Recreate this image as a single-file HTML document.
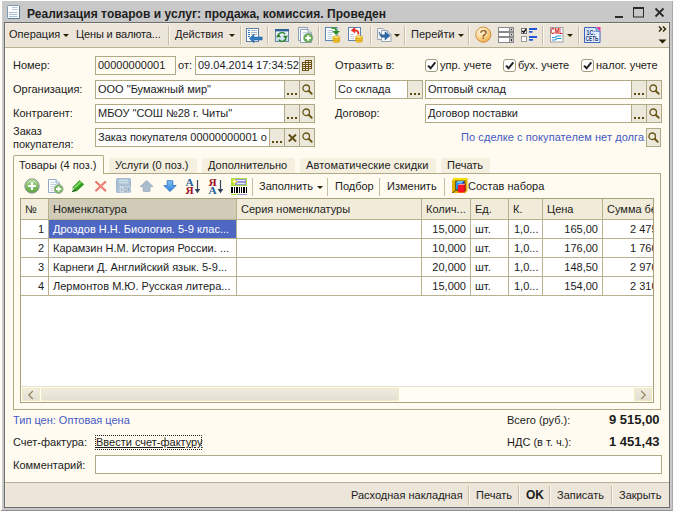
<!DOCTYPE html>
<html lang="ru"><head><meta charset="utf-8"><title>Реализация товаров и услуг</title>
<style>
*{box-sizing:border-box;margin:0;padding:0}
html,body{width:673px;height:511px;overflow:hidden;background:#fff}
body{font-family:"Liberation Sans",sans-serif;font-size:11px;color:#1c1c1c;position:relative}
.abs,.abs *{position:absolute}
#win{left:2px;top:1px;width:671px;height:510px;background:#c8c8c8}
#title{left:27px;top:7px;font-weight:bold;font-size:12px;line-height:14px;white-space:nowrap;color:#1e1e1e;letter-spacing:0.045px}
#frame{left:4px;top:22px;width:666px;height:486px;background:#6c6c6c}
#tb{left:5px;top:23px;width:664px;height:24px;background:#ece5d9}
#form{left:5px;top:48px;width:664px;height:434px;background:#fffbf0}
#tbline{left:5px;top:47px;width:664px;height:1px;background:#b8b18f}
#cmd{left:5px;top:482px;width:664px;height:25px;background:#ece5d9;border-top:1px solid #b8b18f}
.t{white-space:nowrap;line-height:13px;height:13px}
.sep{width:2px;border-left:1px solid #c5bfa3;border-right:1px solid #fbf9f2}
.fld{background:#fff;border:1px solid #b0a985;height:19px}
.fld .t{top:2px;left:2px}
.btn{top:0;width:15px;height:17px;background:#ece8dc;border-left:1px solid #b0a985}
.dots{left:2px;top:0px;font-weight:bold;font-size:11px;line-height:13px;letter-spacing:0.3px;color:#4a3a10}
.cb{width:13px;height:13px;border:1px solid #a39c80;border-radius:3px;background:#fff}
.arr{width:0;height:0;border-left:3px solid transparent;border-right:3px solid transparent;border-top:3px solid #2b2000}
.tab{top:158px;height:15px;background:#f4efdf;border-radius:3px 3px 0 0}
.tab .t{top:1px}
.blue{color:#4559c4}
.gl{background:#b8b18f}
.r{text-align:right}
.sb{background:linear-gradient(#efebe0,#e3dfd2);border:1px solid #f1e9c0}
</style></head><body>
<div class="abs">
<div style="left:0;top:1px;width:1px;height:510px;background:#fffbf0"></div>
<div id="win"></div>
<div style="left:1px;top:510px;width:672px;height:1px;background:#929292"></div>
<div style="left:672px;top:1px;width:1px;height:510px;background:#a8a8a8"></div>
<div id="frame"></div>
<div id="title">Реализация товаров и услуг: продажа, комиссия. Проведен</div>
<div id="tb"></div>
<div id="tbline"></div>
<div style="left:5px;top:23px;width:664px;height:1px;background:#f5efe2"></div>
<div style="left:5px;top:23px;width:1px;height:24px;background:#f5efe2"></div>
<div id="form"></div>
<div id="cmd"></div>
<div style="left:5px;top:506px;width:664px;height:1px;background:#f3ecde"></div>
<div style="left:5px;top:483px;width:1px;height:24px;background:#f3ecde"></div>

<!-- toolbar text -->
<div class="t" style="left:9px;top:28px">Операция</div>
<div class="arr" style="left:63px;top:34px"></div>
<div class="t" style="left:76px;top:28px;letter-spacing:-0.15px">Цены и валюта...</div>
<div class="sep" style="left:168px;top:26px;height:19px"></div>
<div class="t" style="left:175px;top:28px">Действия</div>
<div class="arr" style="left:229px;top:34px"></div>
<div class="sep" style="left:240px;top:26px;height:19px"></div>
<div class="sep" style="left:267px;top:26px;height:19px"></div>
<div class="sep" style="left:318px;top:26px;height:19px"></div>
<div class="sep" style="left:370px;top:26px;height:19px"></div>
<div class="arr" style="left:394px;top:34px"></div>
<div class="sep" style="left:404px;top:26px;height:19px"></div>
<div class="t" style="left:411px;top:28px">Перейти</div>
<div class="arr" style="left:458px;top:34px"></div>
<div class="sep" style="left:468px;top:26px;height:19px"></div>
<div class="sep" style="left:542px;top:26px;height:19px"></div>
<div class="arr" style="left:567px;top:34px"></div>
<div class="sep" style="left:578px;top:26px;height:19px"></div>

<!-- row 1 -->
<div class="t" style="left:13px;top:59px">Номер:</div>
<div class="fld" style="left:95px;top:56px;width:81px;background:#fffbf0"><div class="t">00000000001</div></div>
<div class="t" style="left:178px;top:59px">от:</div>
<div class="fld" style="left:195px;top:56px;width:120px"><div class="t">09.04.2014 17:34:52</div><div class="btn" style="left:103px"><svg style="left:2px;top:3px" width="10" height="11" viewBox="0 0 10 11" shape-rendering="crispEdges"><g fill="#6b5210"><rect x="3" y="0" width="7" height="1"/><rect x="0" y="2" width="10" height="1"/><rect x="0" y="4" width="10" height="1"/><rect x="0" y="6" width="10" height="1"/><rect x="0" y="8" width="10" height="1"/><rect x="0" y="10" width="7" height="1"/><rect x="0" y="2" width="1" height="9"/><rect x="3" y="0" width="1" height="11"/><rect x="6" y="0" width="1" height="11"/><rect x="9" y="0" width="1" height="9"/></g></svg></div></div>
<div class="t" style="left:335px;top:59px">Отразить в:</div>
<div class="cb" style="left:425px;top:59px"><svg style="left:0;top:0" width="11" height="11" viewBox="0 0 11 11"><path d="M2 5.6 L4.6 8.3 L9.3 2.4" stroke="#222" stroke-width="2" fill="none"/></svg></div><div class="t" style="left:440px;top:59px">упр. учете</div>
<div class="cb" style="left:503px;top:59px"><svg style="left:0;top:0" width="11" height="11" viewBox="0 0 11 11"><path d="M2 5.6 L4.6 8.3 L9.3 2.4" stroke="#222" stroke-width="2" fill="none"/></svg></div><div class="t" style="left:518px;top:59px">бух. учете</div>
<div class="cb" style="left:581px;top:59px"><svg style="left:0;top:0" width="11" height="11" viewBox="0 0 11 11"><path d="M2 5.6 L4.6 8.3 L9.3 2.4" stroke="#222" stroke-width="2" fill="none"/></svg></div><div class="t" style="left:596px;top:59px">налог. учете</div>

<!-- row 2 -->
<div class="t" style="left:13px;top:83px">Организация:</div>
<div class="fld" style="left:95px;top:80px;width:220px"><div class="t">ООО "Бумажный мир"</div><div class="btn" style="left:188px"><svg style="left:2px;top:12px" width="10" height="2" viewBox="0 0 10 2" shape-rendering="crispEdges"><g fill="#5c4a10"><rect x="0" y="0" width="2" height="2"/><rect x="4" y="0" width="2" height="2"/><rect x="8" y="0" width="2" height="2"/></g></svg></div><div class="btn" style="left:203px"><svg style="left:1px;top:2px" width="13" height="13" viewBox="0 0 13 13"><circle cx="5.2" cy="5.3" r="3.3" fill="none" stroke="#6b5716" stroke-width="1.3"/><path d="M7.6 7.8 L10.7 10.8" stroke="#6b5716" stroke-width="1.9" stroke-linecap="round"/></svg></div></div>
<div class="fld" style="left:335px;top:80px;width:88px"><div class="t">Со склада</div><div class="btn" style="left:71px"><svg style="left:2px;top:12px" width="10" height="2" viewBox="0 0 10 2" shape-rendering="crispEdges"><g fill="#5c4a10"><rect x="0" y="0" width="2" height="2"/><rect x="4" y="0" width="2" height="2"/><rect x="8" y="0" width="2" height="2"/></g></svg></div></div>
<div class="fld" style="left:425px;top:80px;width:237px"><div class="t">Оптовый склад</div><div class="btn" style="left:205px"><svg style="left:2px;top:12px" width="10" height="2" viewBox="0 0 10 2" shape-rendering="crispEdges"><g fill="#5c4a10"><rect x="0" y="0" width="2" height="2"/><rect x="4" y="0" width="2" height="2"/><rect x="8" y="0" width="2" height="2"/></g></svg></div><div class="btn" style="left:220px"><svg style="left:1px;top:2px" width="13" height="13" viewBox="0 0 13 13"><circle cx="5.2" cy="5.3" r="3.3" fill="none" stroke="#6b5716" stroke-width="1.3"/><path d="M7.6 7.8 L10.7 10.8" stroke="#6b5716" stroke-width="1.9" stroke-linecap="round"/></svg></div></div>

<!-- row 3 -->
<div class="t" style="left:13px;top:107px">Контрагент:</div>
<div class="fld" style="left:95px;top:104px;width:220px"><div class="t">МБОУ "СОШ №28 г. Читы"</div><div class="btn" style="left:188px"><svg style="left:2px;top:12px" width="10" height="2" viewBox="0 0 10 2" shape-rendering="crispEdges"><g fill="#5c4a10"><rect x="0" y="0" width="2" height="2"/><rect x="4" y="0" width="2" height="2"/><rect x="8" y="0" width="2" height="2"/></g></svg></div><div class="btn" style="left:203px"><svg style="left:1px;top:2px" width="13" height="13" viewBox="0 0 13 13"><circle cx="5.2" cy="5.3" r="3.3" fill="none" stroke="#6b5716" stroke-width="1.3"/><path d="M7.6 7.8 L10.7 10.8" stroke="#6b5716" stroke-width="1.9" stroke-linecap="round"/></svg></div></div>
<div class="t" style="left:335px;top:107px">Договор:</div>
<div class="fld" style="left:425px;top:104px;width:237px"><div class="t">Договор поставки</div><div class="btn" style="left:205px"><svg style="left:2px;top:12px" width="10" height="2" viewBox="0 0 10 2" shape-rendering="crispEdges"><g fill="#5c4a10"><rect x="0" y="0" width="2" height="2"/><rect x="4" y="0" width="2" height="2"/><rect x="8" y="0" width="2" height="2"/></g></svg></div><div class="btn" style="left:220px"><svg style="left:1px;top:2px" width="13" height="13" viewBox="0 0 13 13"><circle cx="5.2" cy="5.3" r="3.3" fill="none" stroke="#6b5716" stroke-width="1.3"/><path d="M7.6 7.8 L10.7 10.8" stroke="#6b5716" stroke-width="1.9" stroke-linecap="round"/></svg></div></div>

<!-- row 4 -->
<div class="t" style="left:13px;top:125px">Заказ</div>
<div class="t" style="left:13px;top:138px">покупателя:</div>
<div class="fld" style="left:95px;top:128px;width:220px"><div class="t">Заказ покупателя 00000000001 о</div><div class="btn" style="left:173px"><svg style="left:2px;top:12px" width="10" height="2" viewBox="0 0 10 2" shape-rendering="crispEdges"><g fill="#5c4a10"><rect x="0" y="0" width="2" height="2"/><rect x="4" y="0" width="2" height="2"/><rect x="8" y="0" width="2" height="2"/></g></svg></div><div class="btn" style="left:188px"><svg style="left:3px;top:5px" width="9" height="8" viewBox="0 0 9 8"><path d="M0.8 0.6 L8 7.4 M8 0.6 L0.8 7.4" stroke="#5c4a10" stroke-width="2" fill="none"/></svg></div><div class="btn" style="left:203px"><svg style="left:1px;top:2px" width="13" height="13" viewBox="0 0 13 13"><circle cx="5.2" cy="5.3" r="3.3" fill="none" stroke="#6b5716" stroke-width="1.3"/><path d="M7.6 7.8 L10.7 10.8" stroke="#6b5716" stroke-width="1.9" stroke-linecap="round"/></svg></div></div>
<div class="t blue" style="left:461px;top:131px;letter-spacing:0.08px">По сделке с покупателем нет долга</div>
<div class="fld" style="left:646px;top:128px;width:15px;background:#ece8dc"><svg style="left:0px;top:2px" width="13" height="13" viewBox="0 0 13 13"><circle cx="5.2" cy="5.3" r="3.3" fill="none" stroke="#6b5716" stroke-width="1.3"/><path d="M7.6 7.8 L10.7 10.8" stroke="#6b5716" stroke-width="1.9" stroke-linecap="round"/></svg></div>

<!-- tabs -->
<div style="left:13px;top:173px;width:648px;height:237px;border:1px solid #b0a985;background:#fffbf0"></div>
<div style="left:13px;top:155px;width:91px;height:19px;border:1px solid #b0a985;border-bottom:none;background:#fffbf0;border-radius:2px 2px 0 0"></div>
<div class="t" style="left:19px;top:159px">Товары (4 поз.)</div>
<div class="tab" style="left:109px;width:88px"><div class="t" style="left:6px">Услуги (0 поз.)</div></div>
<div class="tab" style="left:202px;width:93px"><div class="t" style="left:6px">Дополнительно</div></div>
<div class="tab" style="left:300px;width:136px"><div class="t" style="left:6px;letter-spacing:0.12px">Автоматические скидки</div></div>
<div class="tab" style="left:441px;width:49px"><div class="t" style="left:6px">Печать</div></div>

<!-- sub toolbar -->
<div class="sep" style="left:252px;top:178px;height:18px"></div>
<div class="t" style="left:259px;top:180px">Заполнить</div>
<div class="arr" style="left:317px;top:186px"></div>
<div class="sep" style="left:327px;top:178px;height:18px"></div>
<div class="t" style="left:335px;top:180px">Подбор</div>
<div class="sep" style="left:379px;top:178px;height:18px"></div>
<div class="t" style="left:387px;top:180px">Изменить</div>
<div class="sep" style="left:444px;top:178px;height:18px"></div>
<div class="t" style="left:468px;top:180px">Состав набора</div>

<!-- table -->
<div id="tbl" style="left:20px;top:198px;width:634px;height:205px;background:#fff;border:1px solid #a8a17c;overflow:hidden">
<div style="left:0;top:0;width:632px;height:20px;background:#f1ecd9"></div>
<div style="left:28px;top:0;width:187px;height:20px;background:#d0ccb8"></div>
<div class="gl" style="left:0;top:20px;width:632px;height:1px"></div>
<div class="gl" style="left:0;top:39px;width:632px;height:1px"></div>
<div class="gl" style="left:0;top:58px;width:632px;height:1px"></div>
<div class="gl" style="left:0;top:77px;width:632px;height:1px"></div>
<div class="gl" style="left:0;top:96px;width:632px;height:1px"></div>
<div class="gl" style="left:27px;top:0;width:1px;height:97px"></div>
<div class="gl" style="left:215px;top:0;width:1px;height:97px"></div>
<div class="gl" style="left:400px;top:0;width:1px;height:97px"></div>
<div class="gl" style="left:449px;top:0;width:1px;height:97px"></div>
<div class="gl" style="left:487px;top:0;width:1px;height:97px"></div>
<div class="gl" style="left:521px;top:0;width:1px;height:97px"></div>
<div class="gl" style="left:581px;top:0;width:1px;height:97px"></div>
<div style="left:28px;top:21px;width:187px;height:18px;background:#4e67c3"></div>
<div class="t" style="left:4px;top:4px">№</div>
<div class="t" style="left:32px;top:4px">Номенклатура</div>
<div class="t" style="left:220px;top:4px">Серия номенклатуры</div>
<div class="t" style="left:405px;top:4px">Колич...</div>
<div class="t" style="left:454px;top:4px">Ед.</div>
<div class="t" style="left:492px;top:4px">К.</div>
<div class="t" style="left:526px;top:4px">Цена</div>
<div class="t" style="left:586px;top:4px">Сумма без скидки</div>
<div class="t r" style="left:0px;width:23px;top:24px">1</div>
<div class="t" style="left:32px;top:24px;color:#fff">Дроздов Н.Н. Биология. 5-9 клас...</div>
<div class="t r" style="left:401px;width:44px;top:24px">15,000</div>
<div class="t" style="left:454px;top:24px">шт.</div>
<div class="t" style="left:493px;top:24px">1,0...</div>
<div class="t r" style="left:522px;width:55px;top:24px">165,00</div>
<div class="t" style="left:609px;top:24px">2 475,00</div>
<div class="t r" style="left:0px;width:23px;top:43px">2</div>
<div class="t" style="left:32px;top:43px;">Карамзин Н.М. История России. ...</div>
<div class="t r" style="left:401px;width:44px;top:43px">10,000</div>
<div class="t" style="left:454px;top:43px">шт.</div>
<div class="t" style="left:493px;top:43px">1,0...</div>
<div class="t r" style="left:522px;width:55px;top:43px">176,00</div>
<div class="t" style="left:609px;top:43px">1 760,00</div>
<div class="t r" style="left:0px;width:23px;top:62px">3</div>
<div class="t" style="left:32px;top:62px;">Карнеги Д. Английский язык. 5-9...</div>
<div class="t r" style="left:401px;width:44px;top:62px">20,000</div>
<div class="t" style="left:454px;top:62px">шт.</div>
<div class="t" style="left:493px;top:62px">1,0...</div>
<div class="t r" style="left:522px;width:55px;top:62px">148,50</div>
<div class="t" style="left:609px;top:62px">2 970,00</div>
<div class="t r" style="left:0px;width:23px;top:81px">4</div>
<div class="t" style="left:32px;top:81px;">Лермонтов М.Ю. Русская литера...</div>
<div class="t r" style="left:401px;width:44px;top:81px">15,000</div>
<div class="t" style="left:454px;top:81px">шт.</div>
<div class="t" style="left:493px;top:81px">1,0...</div>
<div class="t r" style="left:522px;width:55px;top:81px">154,00</div>
<div class="t" style="left:609px;top:81px">2 310,00</div>
<div style="left:0;top:187px;width:632px;height:16px;background:#fffdf4;border-top:1px solid #e6e1cf"></div>
<div class="sb" style="left:1px;top:189px;width:18px;height:13px"></div>
<div class="sb" style="left:20px;top:189px;width:358px;height:13px"></div>
<div class="sb" style="left:613px;top:189px;width:18px;height:13px"></div>
</div>

<!-- bottom -->
<div class="t blue" style="left:13px;top:414px">Тип цен: Оптовая цена</div>
<div class="t" style="left:507px;top:414px">Всего (руб.):</div>
<div class="t" style="left:609px;top:413px;font-weight:bold;font-size:13px;line-height:14px;height:14px">9 515,00</div>
<div class="t" style="left:13px;top:436px">Счет-фактура:</div>
<div class="t" style="left:96px;top:436px;text-decoration:underline">Ввести счет-фактуру</div>
<div style="left:95px;top:435px;width:107px;height:15px;border:1px dotted #222"></div>
<div class="t" style="left:507px;top:436px">НДС (в т. ч.):</div>
<div class="t" style="left:609px;top:435px;font-weight:bold;font-size:13px;line-height:14px;height:14px">1 451,43</div>
<div class="t" style="left:13px;top:459px">Комментарий:</div>
<div class="fld" style="left:95px;top:455px;width:567px"></div>

<!-- command bar -->
<div class="t" style="left:351px;top:489px">Расходная накладная</div>
<div class="sep" style="left:468px;top:486px;height:19px"></div>
<div class="t" style="left:476px;top:489px">Печать</div>
<div class="sep" style="left:518px;top:486px;height:19px"></div>
<div class="t" style="left:526px;top:488px;font-weight:bold;font-size:12px;line-height:14px;height:14px">OK</div>
<div class="sep" style="left:549px;top:486px;height:19px"></div>
<div class="t" style="left:557px;top:489px">Записать</div>
<div class="sep" style="left:611px;top:486px;height:19px"></div>
<div class="t" style="left:619px;top:489px">Закрыть</div>
<!-- icons -->
<!-- title doc icon -->
<svg style="left:7px;top:5px" width="13" height="14" viewBox="0 0 13 14"><rect x="0.5" y="0.5" width="12" height="13" rx="1" fill="#fff" stroke="#7f9bb3"/><path d="M12.5 1 V13.5 H1" fill="none" stroke="#5f7d95"/><path d="M5 2.5 H10.5 M5 4.5 H10.5" stroke="#b9c9d9"/><path d="M2 7.5 H10.5 M2 9.5 H10.5 M2 11.5 H10.5" stroke="#a9bfd5"/></svg>
<!-- window buttons -->
<svg style="left:612px;top:4px" width="56" height="16" viewBox="0 0 56 16"><rect x="3" y="12" width="8" height="2" fill="#2a2a2a"/><rect x="21.5" y="4" width="10" height="9" fill="none" stroke="#2a2a2a"/><rect x="21" y="3" width="11" height="2" fill="#2a2a2a"/><path d="M43.5 4.5 L51.5 12.5 M51.5 4.5 L43.5 12.5" stroke="#2a2a2a" stroke-width="1.8"/></svg>
<!-- toolbar overflow -->
<svg style="left:657px;top:25px" width="12" height="21" viewBox="0 0 12 21"><path d="M2 1.5 L4.5 4 L2 6.5 M6 1.5 L8.5 4 L6 6.5" fill="none" stroke="#2b2000" stroke-width="1.4"/><path d="M1.5 14.5 H9.5 L5.5 18.5 Z" fill="#2b2000"/></svg>

<!-- tb icon 1: doc with blue arrow left -->
<svg style="left:246px;top:28px" width="17" height="15" viewBox="0 0 17 15"><rect x="0.5" y="0.5" width="12" height="13" fill="#fff" stroke="#5c80a8"/><path d="M2 2.5 H4 M2 4.5 H4 M2 6.5 H4 M2 8.5 H4" stroke="#3a78c0"/><path d="M5 2.5 H11 M5 4.5 H11 M5 6.5 H11 M5 8.5 H8" stroke="#a8b4c0"/><path d="M3.2 10.5 L8 6.2 V9 H16.2 V12 H8 V14.8 Z" fill="#2f7cc0" stroke="#245f98" stroke-width="0.5"/></svg>
<!-- tb icon 2: refresh window -->
<svg style="left:275px;top:29px" width="14" height="13" viewBox="0 0 14 13"><defs><linearGradient id="g2" x1="0" y1="0" x2="0" y2="1"><stop offset="0" stop-color="#fff"/><stop offset="1" stop-color="#c4d9ee"/></linearGradient></defs><rect x="0.5" y="0.5" width="13" height="12" fill="url(#g2)" stroke="#6b8cb0"/><rect x="0" y="0" width="14" height="2.4" fill="#2e6298"/><path d="M3 8 A4 4 0 0 1 10.2 5.2" fill="none" stroke="#2f8a2f" stroke-width="1.5"/><path d="M11 9.5 A4 4 0 0 1 3.8 10.6" fill="none" stroke="#2f8a2f" stroke-width="1.5"/><path d="M1 8.2 H6 L3.5 4.8 Z" fill="#2a7d2a"/><path d="M8 6.8 H13 L10.5 10.2 Z" fill="#2a7d2a"/></svg>
<!-- tb icon 3: copy docs with plus -->
<svg style="left:298px;top:27px" width="16" height="16" viewBox="0 0 16 16"><path d="M0.5 0.5 H9.5 V13.5 H0.5 Z" fill="#f4f7fb" stroke="#8e9fb5"/><path d="M2.5 2.5 H10 L13.5 6 V15.5 H2.5 Z" fill="#fff" stroke="#8e9fb5"/><path d="M10 2.5 V6 H13.5" fill="#dfe8f2" stroke="#8e9fb5"/><path d="M4.5 5.5 H9 M4.5 7.5 H7" stroke="#c5d0de"/><circle cx="10.2" cy="11" r="4.6" fill="#63ae4e" stroke="#8aa08a" stroke-width="0.8"/><path d="M10.2 8.2 V13.8 M7.4 11 H13" stroke="#fff" stroke-width="2"/></svg>
<!-- tb icon 4: doc, green arrow, coins -->
<svg style="left:325px;top:27px" width="16" height="16" viewBox="0 0 16 16"><rect x="0.5" y="0.5" width="11.5" height="13" fill="#fff" stroke="#5c84b4"/><path d="M2.5 3.5 H8 M2.5 5.5 H8 M2.5 7.5 H7 M2.5 9.5 H7 M2.5 11.5 H7" stroke="#b8cde2"/><path d="M6 0.8 C10 0.5 11.2 2 11.2 4.2" fill="none" stroke="#3d9a3d" stroke-width="1.8"/><path d="M7 4 H15 L11 8 Z" fill="#2f8f2f"/><g fill="#f4c830" stroke="#c89610" stroke-width="0.6"><ellipse cx="11.3" cy="14" rx="3.6" ry="1.5"/><ellipse cx="11.3" cy="12.2" rx="3.6" ry="1.5"/><ellipse cx="11.3" cy="10.4" rx="3.6" ry="1.5"/></g><ellipse cx="11.3" cy="10.2" rx="2.4" ry="0.8" fill="#fbe88a"/></svg>
<!-- tb icon 5: doc, red arrow, coins -->
<svg style="left:348px;top:27px" width="16" height="16" viewBox="0 0 16 16"><rect x="0.5" y="0.5" width="12" height="13" fill="#fff" stroke="#5c84b4"/><path d="M2.5 7.5 H6 M2.5 9.5 H6 M2.5 11.5 H6" stroke="#b8cde2"/><path d="M5.5 3.4 C9.5 3 10.6 4.8 10.4 7.5" fill="none" stroke="#e03a2a" stroke-width="1.9"/><path d="M7.2 0 V6.6 L2.8 3.3 Z" fill="#e32f20"/><g fill="#f4c830" stroke="#c89610" stroke-width="0.6"><ellipse cx="11" cy="13.8" rx="3.6" ry="1.5"/><ellipse cx="11" cy="12" rx="3.6" ry="1.5"/><ellipse cx="11" cy="10.2" rx="3.6" ry="1.5"/></g><ellipse cx="11" cy="10" rx="2.4" ry="0.8" fill="#fbe88a"/></svg>
<!-- tb icon 6: two docs blue arrow -->
<svg style="left:377px;top:28px" width="15" height="14" viewBox="0 0 15 14"><path d="M0.5 0.5 H6 L8.5 3 V11.5 H0.5 Z" fill="#f2f4f8" stroke="#9aa4b2"/><path d="M4.5 2.5 H10.5 L14 6 V13.5 H4.5 Z" fill="#f8fafc" stroke="#9aa4b2"/><path d="M10.5 2.5 V6 H14" fill="#dfe6ee" stroke="#9aa4b2"/><path d="M2.2 4 C3 7 5 7.2 8 6.8 V3.8 L13 7.8 L8 12 V9.2 C5 9.8 2.6 8.6 2.2 4 Z" fill="#2f6aa8" stroke="#234f80" stroke-width="0.5"/></svg>
<!-- tb help -->
<svg style="left:475px;top:26px" width="17" height="17" viewBox="0 0 17 17"><defs><radialGradient id="gh" cx="0.35" cy="0.3" r="0.8"><stop offset="0" stop-color="#fff8e8"/><stop offset="0.55" stop-color="#fbd48e"/><stop offset="1" stop-color="#f0a43a"/></radialGradient></defs><circle cx="8.3" cy="8.6" r="7.6" fill="url(#gh)" stroke="#c98a3c" stroke-width="0.9"/><text x="8.4" y="13.2" text-anchor="middle" font-family="Liberation Sans, sans-serif" font-size="13" fill="#85531a" stroke="#85531a" stroke-width="0.2">?</text></svg>
<!-- tb combos list -->
<svg style="left:498px;top:27px" width="16" height="16" viewBox="0 0 16 16" shape-rendering="crispEdges"><g><rect x="0" y="0" width="16" height="5" fill="#8a8a8a"/><rect x="1" y="1" width="10" height="3" fill="#fff"/><rect x="12" y="1" width="3" height="3" fill="#c8c8c8"/><rect x="13" y="2" width="1" height="1" fill="#222"/><rect x="0" y="5" width="16" height="5" fill="#8a8a8a"/><rect x="1" y="6" width="10" height="3" fill="#fff"/><rect x="12" y="6" width="3" height="3" fill="#c8c8c8"/><rect x="13" y="7" width="1" height="1" fill="#222"/><rect x="0" y="10" width="16" height="6" fill="#8a8a8a"/><rect x="1" y="11" width="10" height="4" fill="#fff"/><rect x="12" y="11" width="3" height="4" fill="#c8c8c8"/><rect x="13" y="12" width="1" height="2" fill="#222"/></g></svg>
<!-- tb checklist -->
<svg style="left:521px;top:28px" width="17" height="14" viewBox="0 0 17 14"><rect x="0.5" y="0.5" width="5" height="5" fill="#fff" stroke="#777"/><path d="M1.3 2.8 L2.8 4.4 L5 1.2" fill="none" stroke="#000" stroke-width="1.3"/><rect x="0.5" y="8.5" width="5" height="5" fill="#fff" stroke="#999"/><g fill="#2456d8"><rect x="8" y="0" width="8" height="2"/><rect x="8" y="3" width="3.5" height="1.7"/><rect x="8" y="8" width="8" height="2"/><rect x="8" y="11" width="4" height="1.7"/></g></svg>
<!-- tb CML -->
<svg style="left:550px;top:27px" width="14" height="16" viewBox="0 0 14 16"><rect x="0.5" y="0.5" width="12.5" height="14.5" fill="#fff" stroke="#a0a0a0"/><text x="0.8" y="6.8" font-family="Liberation Sans, sans-serif" font-weight="bold" font-size="8.2" fill="#d41414" textLength="11.8" lengthAdjust="spacingAndGlyphs">CML</text><path d="M2 10.5 H5 L7 9 H11.5" fill="none" stroke="#2a96d6" stroke-width="1.1"/><path d="M2 13 H5 L7 11.5 H11.5" fill="none" stroke="#2a96d6" stroke-width="1.1"/></svg>
<!-- tb 1C:Сеть -->
<svg style="left:584px;top:27px" width="17" height="16" viewBox="0 0 17 16"><defs><linearGradient id="gn" x1="0" y1="0" x2="1" y2="1"><stop offset="0" stop-color="#cfe0f6"/><stop offset="1" stop-color="#f6faff"/></linearGradient></defs><path d="M0.5 0.5 H12 L16 4.5 V15.5 H0.5 Z" fill="url(#gn)" stroke="#3f63b8"/><path d="M12 0 H16.5 V4.5 Z" fill="#f03a9a"/><path d="M12 0.5 V4.5 H16" fill="#8fb2e6" stroke="#3f63b8" stroke-width="0.6"/><text x="2.6" y="8" font-family="Liberation Sans, sans-serif" font-weight="bold" font-size="8" fill="#1d3c86" textLength="8.6" lengthAdjust="spacingAndGlyphs">1С:</text><text x="1.6" y="14.4" font-family="Liberation Sans, sans-serif" font-weight="bold" font-size="7.6" fill="#1d3c86" textLength="12.8" lengthAdjust="spacingAndGlyphs">СЕТЬ</text></svg>

<!-- sub toolbar icons -->
<svg style="left:24px;top:178px" width="16" height="16" viewBox="0 0 16 16"><defs><linearGradient id="gp" x1="0" y1="0" x2="0" y2="1"><stop offset="0" stop-color="#c2e4b0"/><stop offset="0.5" stop-color="#80be66"/><stop offset="1" stop-color="#58a43f"/></linearGradient></defs><circle cx="8" cy="8" r="7.2" fill="url(#gp)" stroke="#8e948c" stroke-width="1"/><path d="M8 4 V12 M4 8 H12" stroke="#fff" stroke-width="2.1"/></svg>
<svg style="left:48px;top:179px" width="16" height="15" viewBox="0 0 16 15"><path d="M0.5 0.5 H8 L11.5 4 V13.5 H0.5 Z" fill="#fff" stroke="#93abc9"/><path d="M8 0.5 V4 H11.5" fill="#e4ecf5" stroke="#93abc9"/><path d="M2.5 3.5 H6.5 M2.5 5.5 H8 M2.5 7.5 H6 M2.5 9.5 H5 M2.5 11.5 H5" stroke="#c0d0e2"/><circle cx="10.6" cy="10" r="4.4" fill="#74b85e" stroke="#93a291" stroke-width="0.9"/><path d="M10.6 7.4 V12.6 M8 10 H13.2" stroke="#fff" stroke-width="1.9"/></svg>
<svg style="left:71px;top:180px" width="14" height="13" viewBox="0 0 14 13"><path d="M0.8 12.2 L1.8 7.2 L5.8 11 Z" fill="#1f6a14"/><path d="M1.8 7.2 L8.6 0.6 L12.8 4.4 L5.8 11 Z" fill="#3fb02a" stroke="#2a8a1c" stroke-width="0.6"/><path d="M3.4 8 L10 1.8" stroke="#8fe070" stroke-width="1.3"/><path d="M5 9.8 L11.6 3.6" stroke="#2c931d" stroke-width="1.2"/><path d="M1 11.4 L1.8 7.6 L3.2 9 Z" fill="#fff"/></svg>
<svg style="left:94px;top:180px" width="13" height="12" viewBox="0 0 13 12"><path d="M2.2 2 L11.2 10.6 M11.2 2 L2.2 10.6" stroke="#e76a63" stroke-width="2.1" stroke-linecap="round"/><path d="M2.6 2.4 L10.8 10.2 M10.8 2.4 L2.6 10.2" stroke="#f4aaa2" stroke-width="0.7" stroke-linecap="round"/></svg>
<svg style="left:116px;top:178px" width="16" height="15" viewBox="0 0 16 15"><rect x="0.5" y="0.5" width="14" height="14" rx="0.8" fill="#abbfd5" stroke="#a2b6cd"/><rect x="3" y="1.2" width="9.2" height="4.6" fill="#c9dbe6" stroke="#b7c9da" stroke-width="0.6"/><path d="M3.5 3.5 H11.8" stroke="#b4ccd8" stroke-width="0.8"/><rect x="3.6" y="8.4" width="11.4" height="6.2" fill="#d3deea"/><rect x="4.6" y="10" width="2" height="3.4" fill="#abbfd5"/><text x="7.6" y="14.4" font-family="Liberation Sans, sans-serif" font-weight="bold" font-size="6.8" fill="#8da3bd" textLength="7.4" lengthAdjust="spacingAndGlyphs">OK</text></svg>
<svg style="left:140px;top:180px" width="14" height="12" viewBox="0 0 14 12"><path d="M6.6 0.4 L13 6.6 H10 V10.8 Q10 11.6 9.2 11.6 H4 Q3.2 11.6 3.2 10.8 V6.6 H0.2 Z" fill="#a9bdcd" stroke="#91a8bb" stroke-width="0.8"/></svg>
<svg style="left:163px;top:180px" width="14" height="12" viewBox="0 0 14 12"><defs><linearGradient id="gd" x1="0" y1="0" x2="0" y2="1"><stop offset="0" stop-color="#7fc0f6"/><stop offset="1" stop-color="#2f82d8"/></linearGradient></defs><path d="M7 11.5 L13.2 5.5 H9.8 V0.7 H4.2 V5.5 H0.8 Z" fill="url(#gd)" stroke="#2a6fc0" stroke-width="0.8"/></svg>
<!-- sort asc -->
<svg style="left:185px;top:178px" width="17" height="17" viewBox="0 0 17 17"><text x="0.4" y="7.8" font-family="Liberation Serif, serif" font-weight="bold" font-size="11.3" fill="#1f5f9c">А</text><text x="0.6" y="15.8" font-family="Liberation Serif, serif" font-weight="bold" font-size="11.3" fill="#a01224">Я</text><path d="M12.5 2 V13" stroke="#34465a" stroke-width="1.2"/><path d="M9.6 11 H15.4 L12.5 15.2 Z" fill="#34465a"/></svg>
<!-- sort desc -->
<svg style="left:208px;top:178px" width="17" height="17" viewBox="0 0 17 17"><text x="0.6" y="7.8" font-family="Liberation Serif, serif" font-weight="bold" font-size="11.3" fill="#a01224">Я</text><text x="0.4" y="15.8" font-family="Liberation Serif, serif" font-weight="bold" font-size="11.3" fill="#1f5f9c">А</text><path d="M12.5 2 V13" stroke="#34465a" stroke-width="1.2"/><path d="M9.6 11 H15.4 L12.5 15.2 Z" fill="#34465a"/></svg>
<!-- barcode -->
<svg style="left:231px;top:178px" width="17" height="17" viewBox="0 0 17 17" shape-rendering="crispEdges"><rect x="0" y="0" width="16" height="8" fill="#a6e03c"/><rect x="4" y="1" width="11" height="6" fill="#9a9ad6"/><rect x="6" y="2" width="8" height="1" fill="#e8e8fa"/><rect x="6" y="5" width="8" height="1" fill="#e8e8fa"/><path d="M3.5 0 L4.6 2.6 L7 3.5 L4.6 4.6 L3.5 7 L2.4 4.6 L0 3.5 L2.4 2.6 Z" fill="#ffe23a" shape-rendering="auto"/><circle cx="3.5" cy="3.5" r="1.3" fill="#fffbe0" shape-rendering="auto"/><rect x="0" y="9" width="16" height="6" fill="#fff"/><g fill="#000"><rect x="0" y="9" width="2" height="6"/><rect x="3" y="9" width="1" height="6"/><rect x="5" y="9" width="2" height="6"/><rect x="8" y="9" width="1" height="6"/><rect x="10" y="9" width="1" height="6"/><rect x="12" y="9" width="2" height="6"/><rect x="15" y="9" width="1" height="6"/></g><rect x="0" y="16" width="7" height="1" fill="#a6e03c"/><rect x="7" y="16" width="9" height="1" fill="#9a9ad6"/></svg>
<!-- sostav nabora -->
<svg style="left:452px;top:178px" width="16" height="15" viewBox="0 0 16 15"><path d="M2 0 H15.5 V12.5 L13.5 15 H0 V2.5 Z" fill="#e6b400"/><path d="M2 0 H15.5 L13.5 2.5 H0 Z" fill="#f2e000"/><rect x="3" y="2.5" width="10.5" height="10.5" fill="#6a5a14"/><path d="M0 15 L3 13" stroke="#5a4a0c"/><path d="M4 5 L6 3 H12 V9 L10 11 H4 Z" fill="#1f8ef0"/><path d="M4 5 L6 3 H12 L10 5 Z" fill="#6cc0ff"/><path d="M10 5 L12 3 V7 H10 Z" fill="#1040c0"/><rect x="6" y="7" width="6.5" height="7.5" fill="#ff1424"/><path d="M6 7 L7.5 5.8 H13.5 L12.5 7 Z" fill="#ff9a9a"/><path d="M12.5 7 L13.5 5.8 V13 L12.5 14.5 Z" fill="#c00010"/></svg>
<!-- scroll arrows -->
<svg style="left:27px;top:390px" width="8" height="10" viewBox="0 0 8 10"><path d="M5.8 1 L1.8 5 L5.8 9" fill="none" stroke="#95875e" stroke-width="1.2"/></svg>
<svg style="left:639px;top:390px" width="8" height="10" viewBox="0 0 8 10"><path d="M2.2 1 L6.2 5 L2.2 9" fill="none" stroke="#95875e" stroke-width="1.2"/></svg>
<!-- /icons -->
</div>
</body></html>
